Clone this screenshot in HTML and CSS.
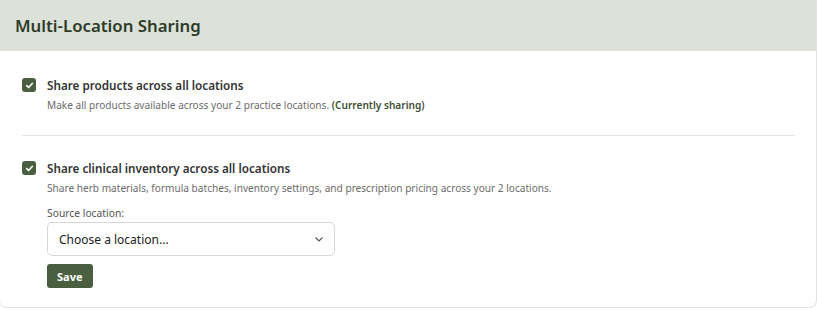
FILE: index.html
```html
<!DOCTYPE html>
<html lang="en">
<head>
  <meta charset="UTF-8">
  <title>Multi-Location Sharing</title>
  <link rel="stylesheet" href="styles.css">
</head>
<body>

<div class="card">
  <div class="card-header">
    <h2>Multi-Location Sharing</h2>
  </div>
  <div class="card-body">
    <div class="option">
      <label class="check-row">
        <input type="checkbox" checked>
        <span class="box"><svg viewBox="0 0 12 12"><path d="M3 6.2l2 2 4-4.4" /></svg></span>
        <span class="label">Share products across all locations</span>
      </label>
      <p class="help">Make all products available across your 2 practice locations. <strong>(Currently sharing)</strong></p>
    </div>

    <hr class="divider">

    <div class="option">
      <label class="check-row">
        <input type="checkbox" checked>
        <span class="box"><svg viewBox="0 0 12 12"><path d="M3 6.2l2 2 4-4.4" /></svg></span>
        <span class="label">Share clinical inventory across all locations</span>
      </label>
      <p class="help">Share herb materials, formula batches, inventory settings, and prescription pricing across your 2 locations.</p>
      <div class="field">
        <label class="field-label" for="source">Source location:</label>
        <div class="select-wrap">
          <select id="source">
            <option>Choose a location...</option>
          </select>
          <svg class="chevron" viewBox="0 0 12 12"><path d="M2.5 4.5l3.5 3.5 3.5-3.5" /></svg>
        </div>
        <button class="save">Save</button>
      </div>
    </div>
  </div>
</div>

</body>
</html>
```

FILE: styles.css
```css
* {
  box-sizing: border-box;
}

body {
  margin: 0;
  background: #fff;
  font-family: "Noto Sans", "Open Sans", sans-serif;
  color: #333;
}

.card {
  width: 817px;
  height: 308px;
  border-right: 1px solid #e3e3e3;
  border-bottom: 1px solid #e3e3e3;
  border-radius: 0 0 8px 8px;
  box-shadow: 0 1px 3px rgba(0, 0, 0, 0.06);
  overflow: hidden;
}

.card-header {
  background: #dce1da;
  height: 51px;
  padding: 0 15px;
  display: flex;
  align-items: center;
}

.card-header h2 {
  margin: 0;
  font-size: 16.8px;
  font-weight: 600;
  color: #2e3b27;
}

.card-body {
  padding: 26px 21px 0 22px;
}

.check-row {
  display: flex;
  align-items: center;
  gap: 11px;
  cursor: pointer;
}

.check-row input {
  display: none;
}

.box {
  width: 14px;
  height: 14px;
  border-radius: 3px;
  background: #4a5f3f;
  display: flex;
  align-items: center;
  justify-content: center;
}

.box svg {
  width: 11px;
  height: 11px;
  fill: none;
  stroke: #fff;
  stroke-width: 1.8;
  stroke-linecap: round;
  stroke-linejoin: round;
}

.label {
  font-size: 11.7px;
  font-weight: 600;
  color: #333;
}

.help {
  margin: 5px 0 0 25px;
  font-size: 10.1px;
  color: #6b6b6b;
}

.help strong {
  font-weight: 600;
  color: #3f4f35;
}

.divider {
  border: none;
  border-top: 1px solid #e4e4e4;
  margin: 23px 0 24px;
}

.field {
  margin-left: 25px;
  margin-top: 11px;
}

.field-label {
  display: block;
  font-size: 10.3px;
  color: #555;
  margin-bottom: 2px;
}

.select-wrap {
  position: relative;
  width: 288px;
}

.select-wrap select {
  appearance: none;
  width: 100%;
  height: 34px;
  border: 1px solid #d6d6d6;
  border-radius: 5px;
  background: #fff;
  padding: 0 11px;
  font-family: inherit;
  font-size: 12px;
  color: #222;
}

.chevron {
  position: absolute;
  right: 10px;
  top: 11px;
  width: 12px;
  height: 12px;
  fill: none;
  stroke: #555;
  stroke-width: 1.2;
}

.save {
  margin-top: 8px;
  background: #4a5f3f;
  color: #fff;
  border: none;
  border-radius: 3px;
  font-family: inherit;
  font-size: 11px;
  font-weight: 700;
  padding: 0 10px;
  height: 24px;
  cursor: pointer;
}
```
